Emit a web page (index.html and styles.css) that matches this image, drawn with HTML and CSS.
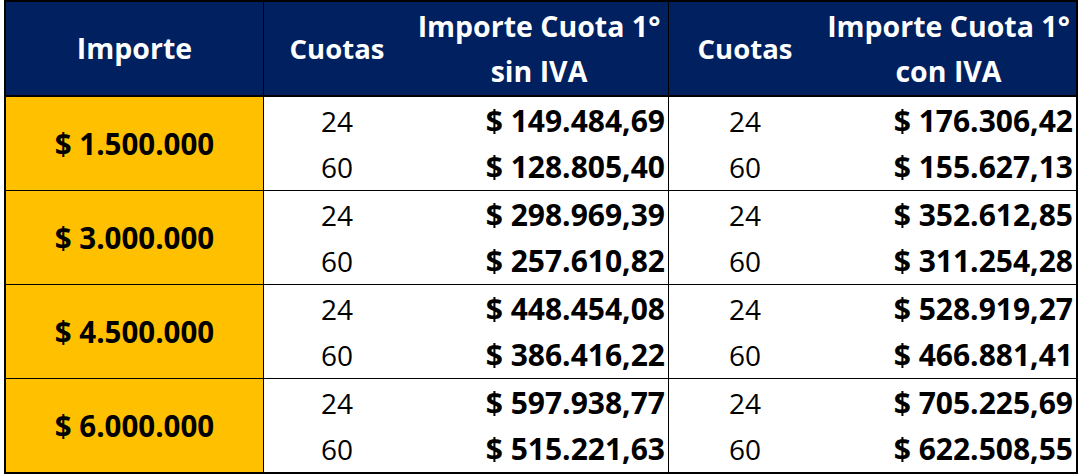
FILE: index.html
```html
<!DOCTYPE html>
<html lang="es">
<head>
<meta charset="utf-8">
<title>Cuotas</title>
<link rel="stylesheet" href="styles.css">
</head>
<body>
<table class="tabla">
  <thead>
    <tr>
      <th class="c1">Importe</th>
      <th class="c2">Cuotas</th>
      <th class="c3">Importe Cuota 1°<br>sin IVA</th>
      <th class="c4">Cuotas</th>
      <th class="c5">Importe Cuota 1°<br>con IVA</th>
    </tr>
  </thead>
  <tbody>
    <tr class="r1">
      <td class="monto" rowspan="2">$ 1.500.000</td>
      <td class="cuotas">24</td><td class="valor sep">$ 149.484,69</td>
      <td class="cuotas">24</td><td class="valor">$ 176.306,42</td>
    </tr>
    <tr class="r2">
      <td class="cuotas">60</td><td class="valor sep">$ 128.805,40</td>
      <td class="cuotas">60</td><td class="valor">$ 155.627,13</td>
    </tr>
    <tr class="r1">
      <td class="monto" rowspan="2">$ 3.000.000</td>
      <td class="cuotas">24</td><td class="valor sep">$ 298.969,39</td>
      <td class="cuotas">24</td><td class="valor">$ 352.612,85</td>
    </tr>
    <tr class="r2">
      <td class="cuotas">60</td><td class="valor sep">$ 257.610,82</td>
      <td class="cuotas">60</td><td class="valor">$ 311.254,28</td>
    </tr>
    <tr class="r1">
      <td class="monto" rowspan="2">$ 4.500.000</td>
      <td class="cuotas">24</td><td class="valor sep">$ 448.454,08</td>
      <td class="cuotas">24</td><td class="valor">$ 528.919,27</td>
    </tr>
    <tr class="r2">
      <td class="cuotas">60</td><td class="valor sep">$ 386.416,22</td>
      <td class="cuotas">60</td><td class="valor">$ 466.881,41</td>
    </tr>
    <tr class="r1">
      <td class="monto" rowspan="2">$ 6.000.000</td>
      <td class="cuotas">24</td><td class="valor sep">$ 597.938,77</td>
      <td class="cuotas">24</td><td class="valor">$ 705.225,69</td>
    </tr>
    <tr class="r2 last">
      <td class="cuotas">60</td><td class="valor sep">$ 515.221,63</td>
      <td class="cuotas">60</td><td class="valor">$ 622.508,55</td>
    </tr>
  </tbody>
</table>
</body>
</html>
```
FILE: styles.css
```css
html, body {
  margin: 0;
  padding: 0;
  background: #ffffff;
}

body {
  padding-left: 4px;
  font-family: "Open Sans", "Noto Sans", sans-serif;
  color: #000000;
}

.tabla {
  border-collapse: separate;
  border-spacing: 0;
  table-layout: fixed;
  width: 1074px;
  border: 2px solid #000000;
}

.tabla th,
.tabla td {
  box-sizing: border-box;
  padding: 0;
}

.tabla th {
  background: #002060;
  color: #ffffff;
  font-weight: 700;
  font-size: 28.5px;
  line-height: 45px;
  height: 95px;
  text-align: center;
  vertical-align: middle;
  border-bottom: 2px solid #000000;
}

.tabla th.c2,
.tabla th.c4 {
  font-size: 27.5px;
}

.c1 { width: 258px; }
.c2 { width: 146px; }
.c3 { width: 259px; }
.c4 { width: 152px; }
.c5 { width: 255px; }

.tabla .c1 { border-right: 1px solid #000000; }
.tabla .c3 { border-right: 1px solid #000000; }

.tabla td {
  font-size: 28px;
  line-height: 38px;
  vertical-align: middle;
}

.r1 td { height: 47px; }
.r2 td { height: 47px; border-bottom: 1px solid #000000; }
.r2.last td { height: 46px; border-bottom: 0; }

.tabla td.monto {
  background: #ffc000;
  font-weight: 700;
  font-size: 29.5px;
  text-align: center;
  border-right: 1px solid #000000;
  border-bottom: 1px solid #000000;
}

.r1:nth-last-child(2) td.monto { border-bottom: 0; }

.cuotas {
  text-align: center;
  font-weight: 400;
}

.tabla td.valor {
  text-align: right;
  font-weight: 700;
  font-size: 30px;
  padding-right: 3px;
}

.tabla td.sep {
  border-right: 1px solid #000000;
}
```
